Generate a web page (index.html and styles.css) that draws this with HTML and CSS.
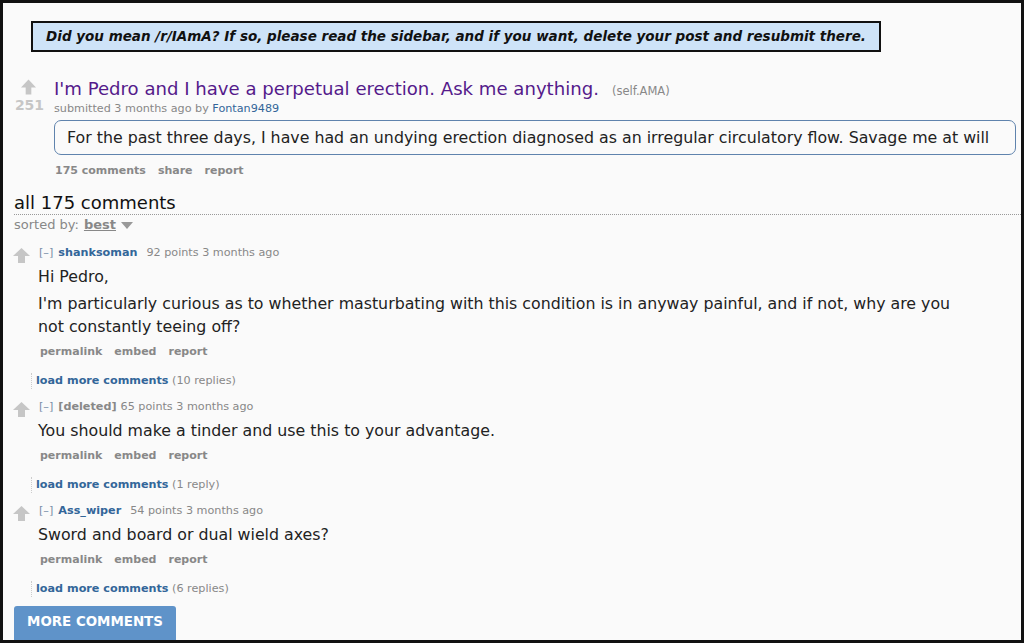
FILE: index.html
```html
<!DOCTYPE html>
<html>
<head>
<meta charset="utf-8">
<link rel="stylesheet" href="styles.css">
</head>
<body>
<div class="page">
  <div class="notice">Did you mean /r/IAmA? If so, please read the sidebar, and if you want, delete your post and resubmit there.</div>

  <div class="post">
    <div class="midcol">
      <svg class="arrow post-arrow" viewBox="0 0 16 16"><path d="M8 0 L16 8.5 L11 8.5 L11 16 L5 16 L5 8.5 L0 8.5 Z"/></svg>
      <div class="score">251</div>
    </div>
    <div class="entry">
      <div class="title-line"><span class="title">I'm Pedro and I have a perpetual erection. Ask me anything.</span><span class="domain">(self.AMA)</span></div>
      <div class="tagline post-tagline">submitted 3 months ago by <span class="author-plain">Fontan9489</span></div>
      <div class="selftext">For the past three days, I have had an undying erection diagnosed as an irregular circulatory flow. Savage me at will</div>
      <div class="buttons post-buttons"><span>175 comments</span><span>share</span><span>report</span></div>
    </div>
  </div>

  <div class="panel-title">all 175 comments</div>
  <div class="sorted">sorted by: <span class="sort-choice">best</span><span class="caret"></span></div>

  <div class="comment first">
    <div class="cmid"><svg class="arrow" viewBox="0 0 17 15"><path d="M8.5 0 L17 8 L12 8 L12 15 L5 15 L5 8 L0 8 Z"/></svg></div>
    <div class="centry">
      <div class="tagline"><span class="expand">[–]</span><span class="author">shanksoman</span><span class="meta">92 points 3 months ago</span></div>
      <div class="body">
        <p>Hi Pedro,</p>
        <p>I'm particularly curious as to whether masturbating with this condition is in anyway painful, and if not, why are you not constantly teeing off?</p>
      </div>
      <div class="buttons"><span>permalink</span><span>embed</span><span>report</span></div>
    </div>
  </div>
  <div class="loadmore"><span class="lm-link">load more comments</span> <span class="lm-count">(10 replies)</span></div>

  <div class="comment">
    <div class="cmid"><svg class="arrow" viewBox="0 0 17 15"><path d="M8.5 0 L17 8 L12 8 L12 15 L5 15 L5 8 L0 8 Z"/></svg></div>
    <div class="centry">
      <div class="tagline"><span class="expand">[–]</span><span class="deleted">[deleted]</span><span class="meta">65 points 3 months ago</span></div>
      <div class="body">
        <p>You should make a tinder and use this to your advantage.</p>
      </div>
      <div class="buttons"><span>permalink</span><span>embed</span><span>report</span></div>
    </div>
  </div>
  <div class="loadmore"><span class="lm-link">load more comments</span> <span class="lm-count">(1 reply)</span></div>

  <div class="comment">
    <div class="cmid"><svg class="arrow" viewBox="0 0 17 15"><path d="M8.5 0 L17 8 L12 8 L12 15 L5 15 L5 8 L0 8 Z"/></svg></div>
    <div class="centry">
      <div class="tagline"><span class="expand">[–]</span><span class="author">Ass_wiper</span><span class="meta">54 points 3 months ago</span></div>
      <div class="body">
        <p>Sword and board or dual wield axes?</p>
      </div>
      <div class="buttons"><span>permalink</span><span>embed</span><span>report</span></div>
    </div>
  </div>
  <div class="loadmore"><span class="lm-link">load more comments</span> <span class="lm-count">(6 replies)</span></div>

  <div class="more-btn">MORE COMMENTS</div>
</div>
</body>
</html>
```

FILE: styles.css
```css
html, body {
  margin: 0;
  padding: 0;
  background: #fafafa;
}
.page {
  box-sizing: border-box;
  width: 1024px;
  height: 643px;
  border: 3px solid #111;
  background: #fafafa;
  overflow: hidden;
  font-family: "DejaVu Sans", Verdana, sans-serif;
  color: #222;
}
.notice {
  box-sizing: border-box;
  width: 850px;
  margin: 18px 0 0 28px;
  border: 2px solid #111;
  background: #cee3f8;
  font-weight: bold;
  font-style: italic;
  font-size: 13.5px;
  line-height: 27px;
  text-align: center;
  color: #111;
}
.post {
  display: flex;
  margin-top: 27px;
  padding-left: 11px;
}
.midcol {
  width: 31px;
  display: flex;
  flex-direction: column;
  align-items: center;
  padding-top: 0;
}
.arrow {
  display: block;
  fill: #c6c6c6;
}
.post-arrow {
  width: 15px;
  height: 16px;
  margin-left: -2px;
}
.score {
  font-size: 14px;
  font-weight: bold;
  color: #c6c6c6;
  line-height: 14px;
  margin-top: 3px;
}
.entry {
  flex: 1;
  margin-left: 9px;
  margin-right: 5px;
}
.title-line {
  font-size: 18.1px;
  line-height: 20px;
  white-space: nowrap;
}
.title {
  color: #551a8b;
}
.domain {
  font-size: 11.5px;
  line-height: 1;
  color: #888;
  margin-left: 13px;
}
.tagline {
  font-size: 11.2px;
  line-height: 14px;
  color: #888;
  white-space: nowrap;
}
.post-tagline {
  margin-top: 3px;
}
.author-plain {
  color: #369;
}
.selftext {
  margin-top: 4px;
  border: 1px solid #5f83ad;
  border-radius: 7px;
  padding: 5px 12px;
  font-size: 15.8px;
  line-height: 23px;
  color: #222;
  white-space: nowrap;
}
.buttons {
  display: flex;
  gap: 12px;
  font-size: 11px;
  font-weight: bold;
  line-height: 14px;
  color: #888;
  margin-top: 7px;
  padding-left: 2px;
}
.post-buttons {
  margin-top: 9px;
  padding-left: 1px;
}
.panel-title {
  margin: 14px 0 0 11px;
  font-size: 18px;
  line-height: 22px;
  color: #111;
  border-bottom: 1px dotted #999;
}
.sorted {
  margin: 2px 0 0 11px;
  font-size: 13px;
  line-height: 16px;
  color: #888;
  display: flex;
  align-items: center;
}
.sort-choice {
  font-weight: bold;
  text-decoration: underline;
  color: #888;
  margin-left: 5px;
}
.caret {
  width: 0;
  height: 0;
  border-left: 6px solid transparent;
  border-right: 6px solid transparent;
  border-top: 7px solid #999;
  margin-left: 5px;
  margin-top: 1px;
}
.comment {
  display: flex;
  margin-top: 11px;
  padding-left: 10px;
}
.comment.first {
  margin-top: 13px;
}
.cmid {
  width: 17px;
  padding-top: 2px;
}
.cmid .arrow {
  width: 17px;
  height: 15px;
}
.centry {
  flex: 1;
  margin-left: 8px;
}
.centry .tagline {
  padding-left: 1px;
}
.expand {
  color: #7a8fa8;
  margin-right: 5px;
}
.author {
  color: #369;
  font-weight: bold;
  margin-right: 9px;
}
.deleted {
  color: #888;
  font-weight: bold;
  margin-right: 4px;
}
.meta {
  color: #888;
}
.body {
  margin-top: 5px;
  width: 925px;
}
.body p {
  margin: 0;
  font-size: 15.8px;
  line-height: 23px;
  color: #222;
}
.body p + p {
  margin-top: 4px;
}
.loadmore {
  margin: 14px 0 0 28px;
  padding-left: 4px;
  border-left: 1px dotted #ccc;
  font-size: 11.2px;
  line-height: 16px;
}
.lm-link {
  color: #369;
  font-weight: bold;
}
.lm-count {
  color: #888;
}
.more-btn {
  margin: 9px 0 0 11px;
  width: 162px;
  height: 38px;
  box-sizing: border-box;
  background: #5f93c9;
  border-radius: 3px;
  color: #fff;
  font-weight: bold;
  font-size: 13.4px;
  line-height: 32px;
  text-align: center;
}
```
